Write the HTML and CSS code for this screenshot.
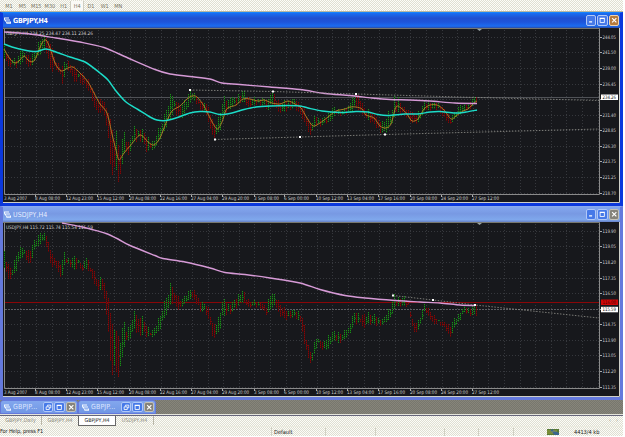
FILE: index.html
```html
<!DOCTYPE html>
<html lang="en">
<head>
<meta charset="utf-8">
<title>Charts</title>
<link rel="stylesheet" href="styles.css">
</head>
<body>
<svg class="defs" width="0" height="0">
  <symbol id="chart-icon" viewBox="0 0 7 7"><path d="M0 .5h5v1H1v1h5v1H2v1h5v2.3H2.5L2 5 .8 4 0 2.5z" fill="#f1f8ff"/><path d="M3 5h3" stroke="#6b97e8" stroke-width=".7"/></symbol>
  <symbol id="min" viewBox="0 0 10 10"><path d="M2.5 7h3.5" stroke="#fff" stroke-width="1.5"/></symbol>
  <symbol id="max" viewBox="0 0 10 10"><path d="M2.5 3.2v4.5h5V3.2" fill="none" stroke="#fff"/><path d="M2 2.7h6" stroke="#fff" stroke-width="1.4"/></symbol>
  <symbol id="restore" viewBox="0 0 10 10"><path d="M4 4V2.5h4v3.2H6.5M2.5 4.5h3.7v3.2H2.5z" fill="none" stroke="#fff"/></symbol>
  <symbol id="close" viewBox="0 0 10 10"><path d="M2.5 2.5l5 5m0-5l-5 5" stroke="#fff" stroke-width="1.4"/></symbol>
</svg>
<div class="app">
  <nav class="toolbar"><span>M1</span><span>M5</span><span>M15</span><span>M30</span><span>H1</span><span class="on">H4</span><span>D1</span><span>W1</span><span>MN</span></nav>
  <section class="window active">
    <header class="title"><svg class="ico"><use href="#chart-icon"/></svg><b>GBPJPY,H4</b>
      <span class="btns"><svg><use href="#min"/></svg><svg><use href="#max"/></svg><svg class="x"><use href="#close"/></svg></span></header>
    <svg class="chart" id="gbp" viewBox="3 28 617 175"></svg>
  </section>
  <section class="window">
    <header class="title"><svg class="ico"><use href="#chart-icon"/></svg><b>USDJPY,H4</b>
      <span class="btns"><svg><use href="#min"/></svg><svg><use href="#max"/></svg><svg class="x"><use href="#close"/></svg></span></header>
    <svg class="chart" id="usd" viewBox="3 221 617 175"></svg>
  </section>
  <div class="desk">
    <div class="mini"><svg class="ico"><use href="#chart-icon"/></svg><b>GBPJP...</b><span class="btns"><svg><use href="#restore"/></svg><svg><use href="#max"/></svg><svg class="x"><use href="#close"/></svg></span></div>
    <div class="mini"><svg class="ico"><use href="#chart-icon"/></svg><b>GBPJP...</b><span class="btns"><svg><use href="#restore"/></svg><svg><use href="#max"/></svg><svg class="x"><use href="#close"/></svg></span></div>
  </div>
  <div class="tabs"><span class="t1">GBPJPY,Daily</span><span class="t2">GBPJPY,H4</span><span class="cur">GBPJPY,H4</span><span class="t3">USDJPY,H4</span><i>‹</i><i>›</i></div>
  <footer class="status"><span class="help">For Help, press F1</span><span class="profile">Default</span><span class="cell c1"></span><span class="cell c2"></span><span class="cell c3"></span><span class="cell c4"></span><span class="cell c5"></span>
    <svg class="signal" viewBox="0 0 12 6"><path d="M0 0h12v6H0z" fill="#597b35"/><path d="M5 0l7 4v2H8L3 2z" fill="#3b668e"/><path d="M1 1v4M3 1v4M5 2v3M7 1v2M9 1v2" stroke="#b4ad3d" stroke-width=".7"/></svg>
    <span>4413/4 kb</span></footer>
</div>
<script src="chart.js"></script>
</body>
</html>
```
FILE: styles.css
```css
* { box-sizing: border-box; }
body { margin: 0; background: #fff; font-family: "DejaVu Sans Condensed", "DejaVu Sans", sans-serif; overflow: hidden; }
.defs { display: block; height: 0; }
.app { width: 623px; height: 437px; display: flex; flex-direction: column; }
.toolbar, .tabs, .status { background: repeating-conic-gradient(#dfdfd2 0 25%, #fcfcf8 0 50%) 0 0 / 2px 2px; }
.toolbar { height: 12px; flex: none; display: flex; align-items: center; padding-left: 2px; border-bottom: 1px solid #b9b7a2; font-size: 5.5px; color: #77735f; }
.toolbar span { width: 13.7px; text-align: center; line-height: 10px; }
.toolbar .on { background: #fafaf6; border: 1px solid #cfcfc2; border-width: 0 1px; }
.window { height: 194px; flex: none; display: flex; flex-direction: column; border: 3px solid #6479dc; border-top: 1px solid #8ba9ee; background: #6479dc; }
.window.active { border-color: #0b38dc; border-top-color: #1682fc; background: #0b38dc; }
.title { height: 15px; flex: none; display: flex; align-items: center; padding: 0 1px; color: #e6edff; background: linear-gradient(#83a7ee, #7899e3 45%, #7fa8ec 85%, #6680c6); }
.active .title { color: #fff; background: linear-gradient(#176ff4, #1f4fd0 35%, #1e55da 60%, #1c6cf0 88%, #2d4aa0); }
.title b { font: bold 7px "DejaVu Sans Condensed", sans-serif; margin-left: 2px; letter-spacing: -.25px; }
.window:not(.active) b { font-weight: normal; letter-spacing: 0.1px; }
.mini b { font-weight: normal; }
.ico { width: 7px; height: 7px; flex: none; }
.btns { margin-left: auto; display: flex; gap: 1px; }
.btns svg { width: 10.5px; height: 10.5px; border: 1px solid #b1c8f8; border-radius: 2px; background: #4679e8; }
.btns svg.x { background: #85837b; border-color: #c4c2b8; }
.active .btns svg.x { background: #b57b3c; border-color: #efd4af; }
.chart { display: block; width: 617px; height: 175px; background: #17181c; }
.desk { height: 15px; flex: none; display: flex; background: repeating-conic-gradient(#77776e 0 25%, #87857a 0 50%) 0 0 / 2px 2px; border-bottom: 1px solid #e5e5db; }
.mini { width: 78px; height: 14px; display: flex; align-items: center; padding: 0 1px 0 3px; color: #dce6ff; background: linear-gradient(#83a7ee, #7197e4); border: 1px solid #6479dc; border-radius: 3px 3px 0 0; }
.mini b { font-size: 7px; margin-left: 2px; letter-spacing: .1px; }
.mini .btns { gap: 1px; }
.tabs { height: 11px; flex: none; display: flex; align-items: flex-start; border-top: 1px solid #66667a; font-size: 5.3px; line-height: 9px; color: #8f8c7e; }
.tabs span { text-align: center; white-space: nowrap; }
.t1 { width: 42px; border-right: 1px solid #b9b7a8; }
.t2 { width: 36px; }
.tabs .cur { width: 38px; height: 10px; background: #fff; color: #222; border: 1px solid #666; border-top: 0; }
.t3 { width: 38px; border-right: 1px solid #b9b7a8; margin-right: 455px; }
.tabs i { font-style: normal; width: 7px; color: #99978a; }
.status { height: 10px; flex: none; display: flex; align-items: center; font-size: 5.6px; color: #222; white-space: nowrap; border-top: 1px solid #ebebdf; }
.help { width: 272px; height: 9px; border-right: 1px solid #d0d0c3; line-height: 9px; letter-spacing: -.12px; }
.profile { width: 53px; padding-left: 2px; }
.cell { height: 8px; border-left: 1px solid #d0d0c3; }
.c1 { width: 50px; }
.c2 { width: 69px; }
.c3 { width: 34px; }
.c4 { width: 35px; }
.c5 { width: 34px; }
.signal { width: 12px; height: 6px; margin-right: 15px; }
```
FILE: chart.js
```js
const NS = 'http://www.w3.org/2000/svg';
function add(svg, tag, attrs, text) {
  const el = document.createElementNS(NS, tag);
  for (const k in attrs) el.setAttribute(k, attrs[k]);
  if (text) el.textContent = text;
  svg.appendChild(el);
  return el;
}
const parse = s => s.trim().split(/\s+/).map(p => p.split(',').map(Number));
// smooth line through the points (Catmull-Rom converted to Bezier segments)
function curve(svg, s, color, width, opacity = 1) {
  const p = parse(s);
  let d = `M${p[0]}`;
  for (let i = 0; i < p.length - 1; i++) {
    const a = p[i - 1] || p[i], b = p[i], c = p[i + 1], e = p[i + 2] || c;
    d += `C${b[0] + (c[0] - a[0]) / 7} ${b[1] + (c[1] - a[1]) / 7} ${c[0] - (e[0] - b[0]) / 7} ${c[1] - (e[1] - b[1]) / 7} ${c[0]} ${c[1]}`;
  }
  add(svg, 'path', { d, fill: 'none', stroke: color, 'stroke-width': width, opacity });
}
function label(svg, x, y, text, len, fill = '#d2d2d2') {
  add(svg, 'text', { x, y, fill, 'font-size': 4.9, 'font-family': 'DejaVu Sans Condensed, sans-serif', textLength: len, lengthAdjust: 'spacingAndGlyphs' }, text);
}
// keys: x,high,low sampled along the series; bars are interpolated every 2px
function bars(svg, s) {
  const k = parse(s);
  let j = 0, prev = (k[0][1] + k[0][2]) / 2;
  for (let x = 4, n = 0; x <= 477; x += 2, n++) {
    while (j < k.length - 2 && k[j + 1][0] < x) j++;
    const a = k[j], b = k[j + 1], t = Math.max(0, Math.min(1, (x - a[0]) / (b[0] - a[0])));
    const w = ((n * 3) % 5 - 2) * 0.7;
    const trim = (n * 7) % 3 === 1 ? (a[2] - a[1]) * 0.16 : 0;
    const hi = a[1] + (b[1] - a[1]) * t + w + trim, lo = a[2] + (b[2] - a[2]) * t + w * 0.6 - trim;
    const mid = (hi + lo) / 2, up = mid <= prev;
    prev = mid;
    const d = `M${x + .5} ${Math.round(hi)}V${Math.round(lo)}`;
    add(svg, 'path', { d, stroke: up ? '#0d4312' : '#560608' });
    add(svg, 'path', { d, stroke: up ? '#1d8a1a' : '#7e0808', 'stroke-dasharray': '1 1' });
    if (n % 2) add(svg, 'path', { d: `M${x + .5} ${Math.round(mid) + .5}h1.4`, stroke: up ? '#126a16' : '#7d0909' });
  }
}
const dates = ['3 Aug 2007', '8 Aug 08:00', '12 Aug 23:00', '15 Aug 12:00', '20 Aug 08:00', '22 Aug 16:00', '27 Aug 04:00', '29 Aug 20:00', '3 Sep 08:00', '6 Sep 00:00', '10 Sep 12:00', '13 Sep 04:00', '17 Sep 16:00', '20 Sep 08:00', '24 Sep 20:00', '27 Sep 12:00'];
const dateX = [4, 35, 66, 97, 129, 160, 191, 222, 254, 284, 316, 347, 378, 410, 441, 472];
function frame(svg, top, prices, header) {
  const ys = [9, 24, 40, 56, 71, 87, 102, 118, 133, 149, 165].map(v => v + top + .5);
  for (let i = 1; i < 39; i++) {
    const x = Math.round(4.8 + i * 15.6) + .5;
    if (x < 599) add(svg, 'path', { d: `M${x} ${top + 2}V${top + 166}`, stroke: '#36383d', 'stroke-dasharray': '1 2' });
  }
  ys.forEach(y => add(svg, 'path', { d: `M5 ${y}H599`, stroke: '#36383d', 'stroke-dasharray': '1 2' }));
  add(svg, 'path', { d: `M4.5 ${top}V${top + 166.5}H599.5V${top}`, fill: 'none', stroke: '#8a8a8a' });
  add(svg, 'path', { d: `M3 ${top + .5}H600`, stroke: '#77776f' });
  add(svg, 'path', { d: `M619.5 ${top}v174.5H3`, stroke: '#cfd0c8', fill: 'none' });
  add(svg, 'path', { d: `M477 ${top + 1}h5l-2.5 2z`, fill: '#9aa4a4' });
  prices.forEach((p, i) => {
    add(svg, 'path', { d: `M600 ${ys[i]}h2`, stroke: '#aaa' });
    if (p) label(svg, 602.5, ys[i] + 1.8, p, 13.5);
  });
  dates.forEach((d, i) => {
    if (i) add(svg, 'path', { d: `M${dateX[i] + .5} ${top + 167}v2`, stroke: '#aaa' });
    label(svg, dateX[i], top + 172.3, d, i ? (d.length > 11 ? 27 : 25) : 23);
  });
  label(svg, 6, top + 6.6, header, 87);
}
function tag(svg, y, text, bg, fg) {
  add(svg, 'rect', { x: 601, y: y - 3, width: 17, height: 5.5, fill: bg });
  label(svg, 602.5, y + 1.6, text, 13.5, fg);
}
const dots = (svg, s) => parse(s).forEach(([x, y]) => add(svg, 'rect', { x: x - 1, y: y - 1, width: 2, height: 2, fill: '#fff' }));
const trend = (svg, s) => add(svg, 'polyline', { points: s, fill: 'none', stroke: '#92928c', 'stroke-width': .8, 'stroke-dasharray': '1.5 1.5' });

const g = document.getElementById('gbp');
frame(g, 28, ['244.05', '241.50', '239.00', '236.45', '', '231.40', '228.85', '226.30', '223.75', '221.25', '218.70'], 'GBPJPY,H4  234.25 234.47 234.11 234.26');
add(g, 'path', { d: 'M5 97.5H599', stroke: '#505257' });
bars(g, `4,45,60 8,56,66 12,58,66 16,60,68 20,50,64 24,52,60 28,56,67 31,54,67 35,52,60 38,43,56 42,37,52 45,36,50 49,40,65 52,48,72 56,62,70 60,66,74 62,66,84 66,60,71 70,64,72 74,67,83 78,72,80 82,73,85 86,78,88 90,82,94 94,93,108 97,100,114 101,97,112 105,105,118 108,112,140 111,120,175 113,140,175 116,130,170 119,153,189 121,142,168 124,133,155 128,143,155 132,134,146 134,127,143 138,129,140 142,129,142 146,136,152 150,140,150 154,142,150 157,130,145 161,126,136 165,112,130 168,104,123 170,93,118 174,98,112 178,104,118 182,103,118 186,99,112 190,90,102 194,94,102 198,99,106 202,102,112 206,103,115 210,112,130 214,125,139 217,120,134 220,112,129 223,96,118 226,100,115 230,97,108 235,98,106 240,93,103 243,90,101 247,98,108 252,98,107 257,99,104 262,98,106 268,100,110 270,92,105 273,94,106 278,101,112 283,102,113 288,100,110 294,99,108 300,104,115 304,108,123 308,120,132 311,122,135 315,116,126 320,118,126 326,117,124 331,108,120 337,109,114 341,110,116 347,108,114 351,100,112 353,96,110 356,94,108 360,97,112 364,109,117 368,110,120 374,114,125 379,120,132 385,122,134 388,112,129 392,110,123 394,97,118 398,98,112 404,108,116 409,110,120 415,114,125 420,110,120 424,102,112 430,102,110 438,102,110 443,108,118 450,117,125 455,112,118 460,104,114 465,105,110 470,101,108 475,96,104 477,97,103`);
curve(g, '4,49 10,59 15,63 19,61 24,56 29,61 34,61 37,55 42,43 46,40 50,48 55,63 61,71 68,68 73,67 80,73 88,82 94,93 100,104 107,113 112,134 116,150 119,160 124,153 130,146 140,135 148,142 154,145 160,138 166,123 172,111 180,106 187,99 192,96 197,97 204,106 210,118 217,129 222,122 226,110 230,107 236,105 243,99 250,99 258,101 264,100 272,103 280,104 288,101 295,104 301,108 307,118 313,126 320,123 328,117 336,111 345,109 350,107 356,107 362,109 366,115 374,118 380,126 386,128 391,124 396,107 401,108 407,114 412,121 418,119 424,109 430,105 437,105 444,110 451,119 456,116 463,111 468,109 474,103 477,101', '#b58428', .9);
curve(g, '4,44 12,47 24,50 36,51.5 46,49 56,52 70,57 85,62 100,73 108,80 116,91 126,102 138,109.5 150,117 157,120 166,120.5 176,118 190,113 200,111.5 210,112 220,114.5 232,113 244,109.5 256,107 270,106 288,105.5 300,106 308,108 322,111 340,112.5 356,111.5 368,112 378,114.5 388,115.5 405,114 418,114 430,112 440,111.5 455,113 466,112 477,110', '#1cdcc8', 1.5);
curve(g, '4,32 30,34 56,38 80,42 104,47.5 128,58 155,69.5 170,74 190,76.5 210,79 222,83 240,84.5 270,87 300,89.5 325,93.5 350,95.5 372,98 390,99.5 410,100 430,101 455,103 477,103.5', '#d69ad6', 1.4);
trend(g, '190,90 273,91.5 356,94 477,97.5 599,100.5');
trend(g, '215,139.5 300,137 385,134.5 599,129');
dots(g, '190,90 273,91.5 356,94 215,139.5 300,137 385,134.5');
tag(g, 97.5, '234.26', '#fff', '#111');

const u = document.getElementById('usd');
frame(u, 221, ['119.90', '119.05', '118.20', '117.35', '116.50', '', '114.75', '113.90', '113.05', '112.20', '111.35'], 'USDJPY,H4  115.72 115.74 115.54 115.59');
add(u, 'path', { d: 'M5 301.5H599', stroke: '#8a0608' });
add(u, 'path', { d: 'M5 308.5H599', stroke: '#5c5e63', 'stroke-dasharray': '2 1' });
bars(u, `4,251,268 8,264,278 12,267,276 16,254,270 20,245,257 24,248,256 28,250,262 30,247,263 34,240,250 38,235,245 40,231,242 44,233,241 47,235,248 49,245,259 52,253,266 56,259,267 61,262,279 64,252,265 68,258,263 74,256,270 78,257,265 82,264,270 86,256,268 90,264,272 94,271,284 98,280,289 101,272,288 105,287,303 109,298,344 111,324,374 114,322,373 117,333,370 119,338,382 121,330,360 124,322,347 127,329,341 131,320,335 134,311,329 138,316,334 142,315,334 146,324,336 150,329,335 154,328,336 157,320,332 161,311,325 165,298,315 168,292,310 170,281,303 174,290,303 178,296,309 183,298,305 187,292,300 190,288,297 195,291,301 200,300,310 205,303,312 209,308,320 213,326,340 217,320,333 220,311,327 222,298,317 226,300,314 230,303,312 236,297,308 240,291,302 243,290,302 247,299,307 253,300,306 260,301,307 266,306,314 270,292,309 274,294,305 280,303,315 285,309,319 290,309,316 297,310,318 301,313,322 303,320,340 306,335,352 309,350,360 312,350,362 315,338,350 318,337,344 323,342,350 328,335,348 332,331,340 338,332,342 343,332,340 349,325,333 352,315,327 355,310,324 360,314,322 364,314,328 368,312,322 376,315,325 383,319,324 388,309,319 391,304,315 393,294,310 398,297,305 403,295,306 408,301,306 412,318,325 414,322,333 418,320,329 422,309,319 424,304,311 429,308,316 433,315,324 438,318,322 444,322,327 450,324,336 454,318,328 459,312,320 463,305,312 470,307,314 475,303,315`);
curve(u, '62,222 80,225.5 92,228.5 106,232.5 118,238 130,244.5 155,254.5 163,257.5 185,261 210,267 225,271.5 245,273.5 270,277 300,282 320,288.5 345,294.5 365,297 395,299.5 420,301 440,302 460,304 475,304.5', '#d69ad6', 1.4);
trend(u, '393,294.5 433,299 475,304 599,317');
dots(u, '393,294.5 433,299 475,304');
tag(u, 301.5, '116.00', '#d00808', '#4a0000');
tag(u, 308.8, '115.59', '#fff', '#111');
```
